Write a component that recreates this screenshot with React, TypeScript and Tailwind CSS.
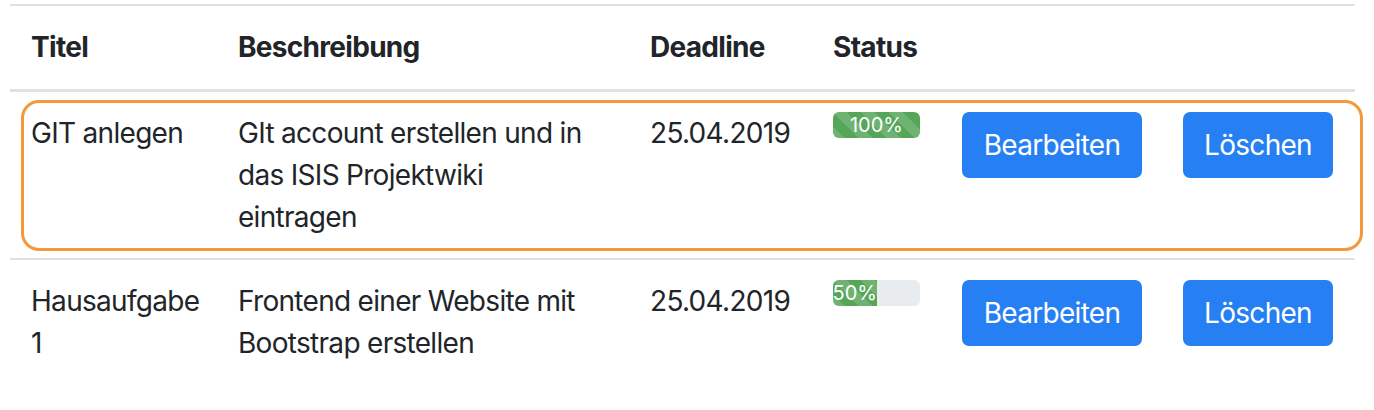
interface Task {
  id: number;
  title: string;
  description: string;
  deadline: string;
  progress: number;
}

const tasks: Task[] = [
  {
    id: 1,
    title: "GIT anlegen",
    description: "GIt account erstellen und in das ISIS Projektwiki eintragen",
    deadline: "25.04.2019",
    progress: 100,
  },
  {
    id: 2,
    title: "Hausaufgabe 1",
    description: "Frontend einer Website mit Bootstrap erstellen",
    deadline: "25.04.2019",
    progress: 50,
  },
];

const stripes =
  "bg-[linear-gradient(45deg,rgba(255,255,255,.15)_25%,transparent_25%,transparent_50%,rgba(255,255,255,.15)_50%,rgba(255,255,255,.15)_75%,transparent_75%,transparent)] bg-[length:28px_28px]";

function Progress({ value }: { value: number }) {
  return (
    <div className="flex h-[26px] w-[87px] overflow-hidden rounded-[6px] bg-[#e9ecef] text-[20px] leading-[26px] tracking-normal text-white">
      <div
        className={`flex justify-center bg-[#55a658] ${stripes}`}
        style={{ width: `${value}%` }}
      >
        {value}%
      </div>
    </div>
  );
}

export default function App() {
  return (
    <div className="min-h-screen bg-white pl-[10px] pt-[4px] font-['Inter','Liberation_Sans',sans-serif] text-[28px] leading-[42px] tracking-[-0.7px] text-[#212529]">
      <div className="relative w-[1345px]">
        <table className="w-full table-fixed border-collapse text-left">
          <thead>
            <tr className="border-t-2 border-b-[3px] border-[#dee2e6]">
              <th className="w-[208px] px-[21px] pt-[20px] pb-[21px] font-bold">Titel</th>
              <th className="w-[412px] px-[20px] pt-[20px] pb-[21px] font-bold">Beschreibung</th>
              <th className="w-[183px] px-[20px] pt-[20px] pb-[21px] font-bold">Deadline</th>
              <th className="w-[129px] px-[20px] pt-[20px] pb-[21px] font-bold">Status</th>
              <th className="w-[221px] px-[20px]"></th>
              <th className="px-[20px]"></th>
            </tr>
          </thead>
          <tbody>
            {tasks.map((task) => (
              <tr key={task.id} className="border-b-2 border-[#dee2e6] last:border-b-0 align-top">
                <td className="py-[20px] pl-[21px] pr-[32px]">{task.title}</td>
                <td className="py-[20px] pl-[20px] pr-[30px]">{task.description}</td>
                <td className="px-[20px] py-[20px]">{task.deadline}</td>
                <td className="px-[20px] pt-[20px]">
                  <Progress value={task.progress} />
                </td>
                <td className="px-[20px] pt-[20px]">
                  <button className="h-[66px] w-[180px] rounded-[7px] bg-[#2680f4] text-white">
                    Bearbeiten
                  </button>
                </td>
                <td className="px-[20px] pt-[20px]">
                  <button className="h-[66px] w-[150px] rounded-[7px] bg-[#2680f4] text-white">
                    Löschen
                  </button>
                </td>
              </tr>
            ))}
          </tbody>
        </table>
        {/* highlight around the first row */}
        <div className="pointer-events-none absolute left-[11px] top-[96px] h-[151px] w-[1342px] rounded-[18px] border-[3px] border-[#f29a3b]"></div>
      </div>
    </div>
  );
}
